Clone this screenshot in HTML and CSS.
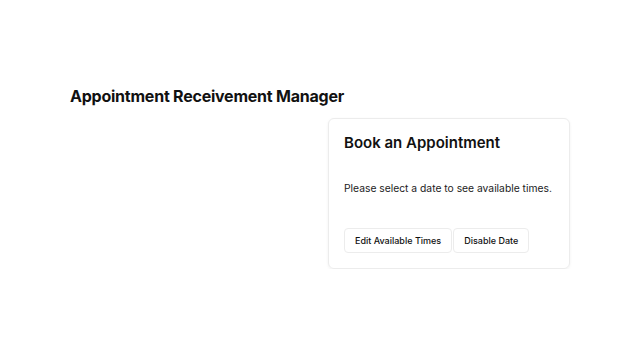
FILE: index.html
```html
<!DOCTYPE html>
<html lang="en">
<head>
<meta charset="utf-8">
<title>Appointment Receivement Manager</title>
<link rel="stylesheet" href="styles.css">
</head>
<body>
<main class="container">
  <h1 class="page-title">Appointment Receivement Manager</h1>
  <div class="layout">
    <section class="calendar-col"></section>
    <section class="card">
      <h2 class="card-title">Book an Appointment</h2>
      <p class="card-text">Please select a date to see available times.</p>
      <div class="actions">
        <button class="btn">Edit Available Times</button>
        <button class="btn">Disable Date</button>
      </div>
    </section>
  </div>
</main>
</body>
</html>
```
FILE: styles.css
```css
html, body {
  margin: 0;
  padding: 0;
  background: #ffffff;
}
body {
  font-family: Inter, "Noto Sans", sans-serif;
  color: #111111;
}
.container {
  width: 500px;
  margin: 0 auto;
  padding-top: 86px;
}
.page-title {
  font-size: 16px;
  line-height: 20px;
  font-weight: 700;
  margin: 0 0 12px 0;
  letter-spacing: -0.23px;
}
.layout {
  display: grid;
  grid-template-columns: 1fr 1fr;
  gap: 16px;
}
.card {
  border: 1px solid #ececec;
  border-radius: 6px;
  box-shadow: 0 1px 3px rgba(0, 0, 0, 0.06);
  padding: 15px 15px 15px 15px;
}
.card-title {
  font-size: 15px;
  line-height: 18px;
  font-weight: 600;
  margin: 0;
}
.card-text {
  font-size: 10.3px;
  line-height: 16px;
  margin: 28px 0 32px 0;
  color: #222222;
  white-space: nowrap;
}
.actions {
  display: flex;
  gap: 1px;
}
.btn {
  font-family: Inter, "Noto Sans", sans-serif;
  font-size: 9px;
  font-weight: 500;
  color: #111111;
  background: #ffffff;
  border: 1px solid #ececec;
  border-radius: 4px;
  height: 25px;
  padding: 0 10px;
}
```
